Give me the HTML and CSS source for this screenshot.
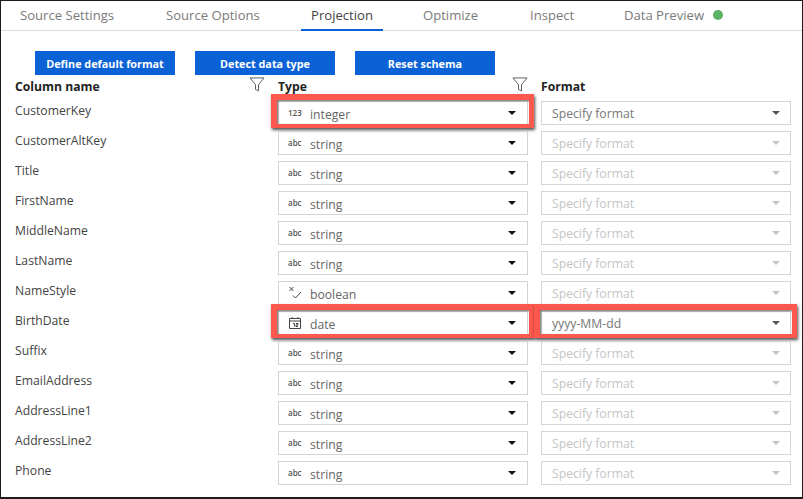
FILE: index.html
```html
<!DOCTYPE html>
<html lang="en">
  <head>
    <meta charset="UTF-8" />
    <title>Projection</title>
    <link rel="stylesheet" href="styles.css">
  </head>
  <body>
    <div class="page">
      <nav class="tabs">
        <a class="tab t1">Source Settings</a>
        <a class="tab t2">Source Options</a>
        <a class="tab t3 active">Projection</a>
        <a class="tab t4">Optimize</a>
        <a class="tab t5">Inspect</a>
        <a class="tab t6">Data Preview <i class="dot"></i></a>
      </nav>

      <div class="actions">
        <button>Define default format</button>
        <button>Detect data type</button>
        <button>Reset schema</button>
      </div>

      <div class="grid" id="grid">
        <div class="head name-head">Column name
          <svg class="funnel" viewBox="0 0 16 16"><path d="M.5 1h15L9.600 8.200v6.600l-3.200-1.600v-5z"/></svg>
        </div>
        <div class="head type-head">Type
          <svg class="funnel" viewBox="0 0 16 16"><path d="M.5 1h15L9.600 8.200v6.600l-3.200-1.600v-5z"/></svg>
        </div>
        <div class="head">Format</div>
      </div>
    </div>
    <script src="rows.js"></script>
  </body>
</html>
```

FILE: styles.css
```css
* {
  box-sizing: border-box;
}
body {
  margin: 0;
  font-family: "Open Sans", sans-serif;
  background: white;
  color: #333;
}
.page {
  width: 803px;
  height: 499px;
  border: 1px solid #1c1c1c;
  border-bottom-width: 2px;
  overflow: hidden;
}
.tabs {
  display: flex;
  height: 30px;
  border-bottom: 1px solid #ddd;
  padding-left: 19px;
}
.tab {
  height: 30px;
  padding-top: 5px;
  font-size: 13.1px;
  line-height: 18px;
  color: #7a7a7a;
  white-space: nowrap;
}
.t1 { width: 146px; }
.t2 { width: 135px; }
.t3 {
  width: 82px;
  margin-right: 40px;
  text-align: center;
}
.t4 { width: 107px; }
.t5 { width: 94px; }
.active {
  color: #444;
  border-bottom: 2px solid #0b62d6;
}
.dot {
  display: inline-block;
  width: 10px;
  height: 10px;
  margin-left: 6px;
  border-radius: 50%;
  background: #5cb264;
}
.actions {
  display: flex;
  gap: 20px;
  padding: 20px 0 0 34px;
}
button {
  width: 140px;
  height: 24px;
  padding: 0;
  border: 0;
  background: #0b62d6;
  color: white;
  font: 700 10.8px "Open Sans", sans-serif;
}
.grid {
  display: grid;
  grid-template-columns: 250px 250px 250px;
  column-gap: 13px;
  grid-auto-rows: 30px;
  padding-left: 14px;
}
.head {
  position: relative;
  height: 26px;
  padding-top: 3px;
  font-size: 12.2px;
  line-height: 18px;
  font-weight: 700;
  color: #222;
}
.funnel {
  position: absolute;
  top: 2px;
  right: 0;
  width: 16px;
  height: 15px;
  fill: none;
  stroke: #555;
}
.name {
  font-size: 12.2px;
  line-height: 18px;
  color: #444;
  margin-top: -3px;
}
.select {
  position: relative;
  display: flex;
  align-items: center;
  height: 24px;
  margin-top: -4px;
  padding: 3px 7px 0;
  border: 1px solid #d4d4d4;
  font-size: 12.2px;
  color: #666;
}
.type-icon {
  width: 24px;
  font-size: 8px;
  font-weight: 600;
  color: #555;
  padding-left: 2px;
  margin-top: -4px;
}
.type-icon svg {
  display: block;
  width: 14px;
  height: 14px;
  fill: none;
  stroke: #444;
}
.caret {
  margin-left: auto;
  margin-right: 4px;
  margin-top: -4px;
  border: 4px solid transparent;
  border-top: 4px solid #111;
  border-bottom: 0;
}
.format {
  padding: 1px 7px 0 10px;
  color: #777;
}
.format .caret {
  margin-right: 3px;
  margin-top: -1px;
  border-top-color: #555;
}
.format.off {
  color: #c4c4c4;
}
.format.off .caret {
  border-top-color: #c4c4c4;
}
.mark::after {
  content: "";
  position: absolute;
  border: solid #fd584d;
  border-width: 6px 5px 4px 6px;
  left: -8px;
  right: -7px;
  top: -8px;
  bottom: -4px;
  box-shadow: 1px 2px 3px rgba(0, 0, 0, 0.7), inset 1px 1px 2px rgba(0, 0, 0, 0.6);
}
```

FILE: rows.js
```js
const rows = [
  ["CustomerKey", "integer"],
  ["CustomerAltKey", "string"],
  ["Title", "string"],
  ["FirstName", "string"],
  ["MiddleName", "string"],
  ["LastName", "string"],
  ["NameStyle", "boolean"],
  ["BirthDate", "date"],
  ["Suffix", "string"],
  ["EmailAddress", "string"],
  ["AddressLine1", "string"],
  ["AddressLine2", "string"],
  ["Phone", "string"],
];

const icons = {
  integer: "123",
  string: "abc",
  boolean: `<svg viewBox="0 0 14 14"><path d="M1.500 1l4 4M5.500 1l-4 4M5 9.500l2.500 2.500L13 6"/></svg>`,
  date: `<svg viewBox="0 0 14 14"><path d="M1.500 2.500h11v10h-11zM1.500 5h11M4 1v2M10 1v2M5 7.500h1.500v3M8 7.500h2v1.500H8v1.500h2"/></svg>`,
};

const grid = document.getElementById("grid");

rows.forEach((r, i) => {
  const name = r[0];
  const type = r[1];
  const isDate = name === "BirthDate";
  const on = i === 0 || isDate;
  const fmtText = isDate ? "yyyy-MM-dd" : "Specify format";

  grid.insertAdjacentHTML(
    "beforeend",
    `<div class="name">${name}</div>
     <div class="select${on ? " mark" : ""}"><span class="type-icon">${icons[type]}</span>${type}<i class="caret"></i></div>
     <div class="select format${on ? "" : " off"}${isDate ? " mark" : ""}">${fmtText}<i class="caret"></i></div>`
  );
});
```
